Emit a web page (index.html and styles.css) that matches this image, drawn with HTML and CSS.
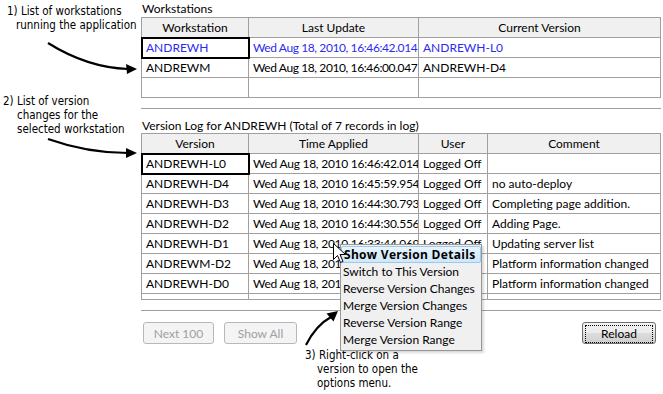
FILE: index.html
```html
<!DOCTYPE html>
<html>
<head>
    <meta charset="UTF-8">
    <title>Workstations</title>
    <link rel="stylesheet" href="styles.css">
</head>
<body>

    <div class="page">
        <div class="notes">
            <p class="note note-one">1) List of workstations<br>running the application</p>
            <p class="note note-two">2) List of version<br>changes for the<br>selected workstation</p>
        </div>

        <div class="main">
            <div class="caption">Workstations</div>
            <table class="grid">
                <colgroup>
                    <col style="width:107px">
                    <col style="width:170px">
                    <col>
                </colgroup>
                <tr>
                    <th>Workstation</th>
                    <th>Last Update</th>
                    <th>Current Version</th>
                </tr>
                <tr class="picked">
                    <td class="focus">ANDREWH</td>
                    <td class="time time-long">Wed Aug 18, 2010, 16:46:42.014</td>
                    <td>ANDREWH-L0</td>
                </tr>
                <tr>
                    <td>ANDREWM</td>
                    <td class="time time-long">Wed Aug 18, 2010, 16:46:00.047</td>
                    <td>ANDREWH-D4</td>
                </tr>
                <tr>
                    <td></td>
                    <td></td>
                    <td></td>
                </tr>
            </table>

            <div class="sep"></div>

            <div class="caption caption-log">Version Log for ANDREWH (Total of 7 records in log)</div>
            <div class="log">
                <table class="grid">
                    <colgroup>
                        <col style="width:107px">
                        <col style="width:170px">
                        <col style="width:69px">
                        <col>
                    </colgroup>
                    <tr>
                        <th>Version</th>
                        <th>Time Applied</th>
                        <th>User</th>
                        <th>Comment</th>
                    </tr>
                    <tr>
                        <td class="focus">ANDREWH-L0</td>
                        <td class="time">Wed Aug 18, 2010 16:46:42.014</td>
                        <td>Logged Off</td>
                        <td></td>
                    </tr>
                    <tr>
                        <td>ANDREWH-D4</td>
                        <td class="time">Wed Aug 18, 2010 16:45:59.954</td>
                        <td>Logged Off</td>
                        <td>no auto-deploy</td>
                    </tr>
                    <tr>
                        <td>ANDREWH-D3</td>
                        <td class="time">Wed Aug 18, 2010 16:44:30.793</td>
                        <td>Logged Off</td>
                        <td>Completing page addition.</td>
                    </tr>
                    <tr>
                        <td>ANDREWH-D2</td>
                        <td class="time">Wed Aug 18, 2010 16:44:30.556</td>
                        <td>Logged Off</td>
                        <td>Adding Page.</td>
                    </tr>
                    <tr>
                        <td>ANDREWH-D1</td>
                        <td class="time">Wed Aug 18, 2010 16:33:44.069</td>
                        <td>Logged Off</td>
                        <td>Updating server list</td>
                    </tr>
                    <tr>
                        <td>ANDREWM-D2</td>
                        <td class="time">Wed Aug 18, 2010 16:20:12.338</td>
                        <td>Logged Off</td>
                        <td>Platform information changed</td>
                    </tr>
                    <tr>
                        <td>ANDREWH-D0</td>
                        <td class="time">Wed Aug 18, 2010 16:20:05.121</td>
                        <td>Logged Off</td>
                        <td>Platform information changed</td>
                    </tr>
                    <tr class="cut">
                        <td></td>
                        <td></td>
                        <td></td>
                        <td></td>
                    </tr>
                </table>

                <ul class="menu">
                    <li class="hot">Show Version Details</li>
                    <li>Switch to This Version</li>
                    <li>Reverse Version Changes</li>
                    <li>Merge Version Changes</li>
                    <li>Reverse Version Range</li>
                    <li>Merge Version Range</li>
                </ul>
            </div>

            <div class="sep"></div>

            <div class="buttons">
                <button class="btn" disabled>Next 100</button>
                <button class="btn btn-all" disabled>Show All</button>
                <button class="btn btn-reload"><span>Reload</span></button>
            </div>

            <p class="note note-three">3) Right-click on a<br>version to open the<br>options menu.</p>
        </div>

        <!-- callout arrows and mouse pointer -->
        <svg class="overlay" width="663" height="394" viewBox="0 0 663 394">
            <path d="M48,43 C72,58 100,68 128,69" fill="none" stroke="#000" stroke-width="2.2"/>
            <polygon points="137,69 126,64 127,74" fill="#000"/>
            <path d="M48,139 C76,149 102,153 128,153" fill="none" stroke="#000" stroke-width="2.2"/>
            <polygon points="137,153 126,148 126,158" fill="#000"/>
            <path d="M306,345 C312,333 320,323 331,317" fill="none" stroke="#000" stroke-width="2.2"/>
            <polygon points="338,311 326.5,313.5 333.5,321.5" fill="#000"/>
            <path d="M333.5,243.5 L333.5,259.5 L337.5,255.5 L340.5,262.5 L343,261.5 L340,254.5 L345.5,254.5 Z" fill="#fff" stroke="#000" stroke-width="1" stroke-linejoin="round"/>
        </svg>
    </div>

</body>
</html>
```

FILE: styles.css
```css
body {
    margin: 0;
    font-family: Lato, "Open Sans", sans-serif;
    font-size: 12px;
    color: #000;
    background: #fff;
}

.page {
    position: relative;
    display: flex;
    width: 663px;
    height: 394px;
    overflow: hidden;
}

.notes {
    width: 141px;
    flex: none;
}

.note {
    margin: 0;
    font-family: "DejaVu Sans Condensed", "DejaVu Sans", sans-serif;
    font-size: 11.5px;
    line-height: 14px;
    color: #000;
    white-space: nowrap;
}

.note-one {
    margin-top: 4px;
    padding-left: 16px;
    text-indent: -9px;
}

.note-two {
    margin-top: 62px;
    padding-left: 17px;
    text-indent: -14px;
}

.note-three {
    margin-top: 4px;
    margin-left: 176px;
    text-indent: -12px;
}

.main {
    width: 520px;
    flex: none;
}

.caption {
    height: 17px;
    line-height: 17px;
    padding-left: 1px;
}

.caption-log {
    height: 15px;
    line-height: 16px;
    margin-top: 9px;
}

table {
    border-collapse: collapse;
    table-layout: fixed;
    width: 520px;
}

th, td {
    height: 19px;
    padding: 0 4px;
    border: 1px solid #a0a0a0;
    white-space: nowrap;
    overflow: hidden;
    font-weight: normal;
    text-align: left;
    line-height: 19px;
}

th {
    background-color: #f0f0f0;
    text-align: center;
}

td.time {
    letter-spacing: -0.25px;
}

td.time-long {
    letter-spacing: -0.4px;
}

.picked td {
    color: #2b2bf0;
}

td.focus {
    outline: 2px solid #000;
    outline-offset: -1px;
}

.cut td {
    height: 5px;
    line-height: 5px;
}

.sep {
    height: 1px;
    margin-top: 10px;
    background-color: #a0a0a0;
}

.log {
    position: relative;
}

.menu {
    position: absolute;
    left: 199px;
    top: 111px;
    width: 140px;
    margin: 0;
    padding: 1px 0 2px 0;
    list-style: none;
    background-color: #f0f0f0;
    border: 1px solid #979797;
    box-shadow: 2px 2px 2px rgba(0, 0, 0, 0.15);
}

.menu li {
    height: 17px;
    line-height: 17px;
    padding-left: 2px;
    white-space: nowrap;
}

.menu .hot {
    height: 15px;
    line-height: 15px;
    font-family: "Open Sans", sans-serif;
    font-weight: bold;
    letter-spacing: 0.3px;
    background: linear-gradient(#e8f4fd, #cfe7fa);
    border: 1px solid #99cbf0;
    border-radius: 2px;
}

.buttons {
    display: flex;
    align-items: center;
    margin-top: 11px;
    padding-left: 2px;
}

.btn {
    height: 22px;
    padding: 0;
    font-family: inherit;
    font-size: 12px;
    border: 1px solid #b5b9bc;
    border-radius: 3px;
    background-color: #f4f4f4;
    color: #a0a0a0;
    width: 71px;
}

.btn-all {
    width: 73px;
    margin-left: 10px;
}

.btn-reload {
    width: 74px;
    margin-left: auto;
    margin-right: 5px;
    color: #000;
    border-color: #707070;
    background: linear-gradient(#f2f2f2 0%, #ebebeb 50%, #dddddd 51%, #cfcfcf 100%);
    padding: 2px;
}

.btn-reload span {
    display: block;
    height: 16px;
    line-height: 16px;
    border: 1px dotted #000;
}

.overlay {
    position: absolute;
    left: 0;
    top: 0;
    pointer-events: none;
}
```
